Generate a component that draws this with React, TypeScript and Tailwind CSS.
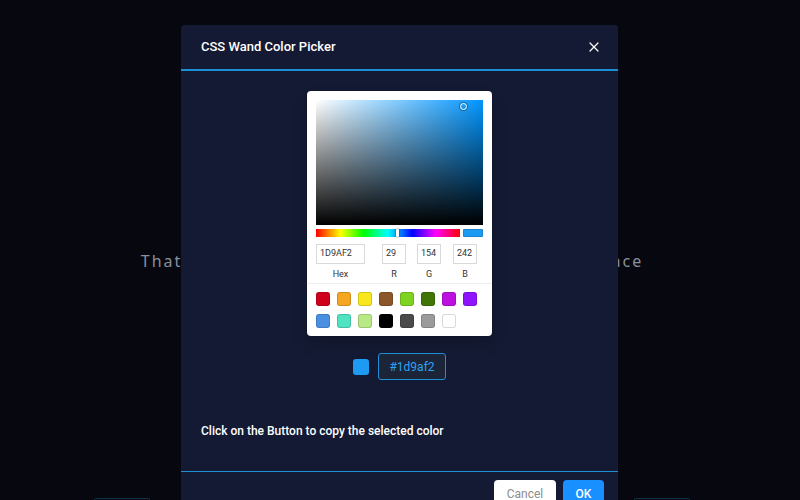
import { X } from "lucide-react"

// ─── Swatch config ────────────────────────────────────────────────────────────

const SWATCHES: string[] = [
  "bg-[#d0021b]", "bg-[#f5a623]", "bg-[#f8e71c]", "bg-[#8b572a]",
  "bg-[#7ed321]", "bg-[#417505]", "bg-[#bd10e0]", "bg-[#9013fe]",
  "bg-[#4a90e2]", "bg-[#50e3c2]", "bg-[#b8e986]", "bg-[#000000]",
  "bg-[#4a4a4a]", "bg-[#9b9b9b]", "bg-[#ffffff]",
]

// ─── Picker (sketch style) ────────────────────────────────────────────────────

function Field({ value, label, w }: { value: string; label: string; w: string }) {
  return (
    <div className={`flex flex-col items-center ${w}`}>
      <div className="w-full h-[20px] border border-[#d9d9d9] text-[9px] text-[#333] px-[3px] flex items-center overflow-hidden">
        {value}
      </div>
      <span className="mt-[4px] text-[9px] leading-[12px] text-[#333]">{label}</span>
    </div>
  )
}

function Picker() {
  return (
    <div className="w-[185px] bg-white rounded-[4px] p-[9px] pb-[8px] shadow-[0_0_0_1px_rgba(0,0,0,0.1),0_8px_16px_rgba(0,0,0,0.15)]">
      <div className="relative h-[125px] bg-[#0095ff]">
        <div className="absolute inset-0 bg-[linear-gradient(to_right,#fff,rgba(255,255,255,0))]" />
        <div className="absolute inset-0 bg-[linear-gradient(to_top,#000,rgba(0,0,0,0))]" />
        <div className="absolute left-[144px] top-[3px] w-[7px] h-[7px] rounded-full border-[1.5px] border-white shadow-[0_0_0_1px_rgba(0,0,0,0.3)]" />
      </div>

      <div className="mt-[4px] flex items-center gap-[3px]">
        <div className="relative flex-1 h-[8px] bg-[linear-gradient(to_right,#f00_0%,#ff0_17%,#0f0_33%,#0ff_50%,#00f_67%,#f0f_83%,#f00_100%)]">
          <div className="absolute left-[80px] top-0 w-[3px] h-[8px] bg-white rounded-[1px] shadow-[0_0_2px_rgba(0,0,0,0.6)]" />
        </div>
        <div className="w-[20px] h-[8px] bg-[#1d9af2] rounded-[1px] shadow-[inset_0_0_0_1px_rgba(0,0,0,0.15)]" />
      </div>

      <div className="mt-[7px] flex items-start">
        <Field value="1D9AF2" label="Hex" w="w-[49px]" />
        <div className="w-[17px]" />
        <Field value="29" label="R" w="w-[24px]" />
        <div className="w-[11px]" />
        <Field value="154" label="G" w="w-[24px]" />
        <div className="w-[12px]" />
        <Field value="242" label="B" w="w-[24px]" />
      </div>

      <div className="-mx-[9px] mt-[3px] border-t border-[#eee]" />

      <div className="mt-[8px] grid grid-cols-8 gap-y-[8px] w-[168px]">
        {SWATCHES.map((c, i) => (
          <div key={i} className={`w-[14px] h-[14px] rounded-[3px] ${c} shadow-[inset_0_0_0_1px_rgba(0,0,0,0.15)]`} />
        ))}
      </div>
    </div>
  )
}

// ─── Main exported component ──────────────────────────────────────────────────

export default function App() {
  return (
    <div className="relative w-[800px] h-[500px] overflow-hidden bg-[#06070f] font-['Roboto',sans-serif]">
      {/* page behind */}
      <div className="flex flex-col items-center pt-[249px] pr-[16px]">
        <p className="text-[16px] tracking-[2px] text-[#8a8f99] font-['Noto_Sans',sans-serif]">
          That color is now ready to be used in your workspace
        </p>
        <div className="mt-[225px] flex gap-[480px]">
          <div className="w-[60px] h-[30px] rounded-[5px] border border-[#0e3447]" />
          <div className="w-[60px] h-[30px] rounded-[5px] border border-[#0e3447]" />
        </div>
      </div>

      {/* dialog */}
      <div className="absolute left-[181px] top-[25px] w-[437px] bg-[#141a33] rounded-t-[3px]">
        <div className="h-[46px] flex items-center justify-between pl-[20px] pr-[16px] border-b-2 border-[#1d8fd6]">
          <span className="text-[13px] font-medium text-white">CSS Wand Color Picker</span>
          <X size={16} strokeWidth={1.8} className="text-white" />
        </div>

        <div className="flex flex-col items-center pt-[20px]">
          <Picker />
          <div className="mt-[17px] flex items-center gap-[9px]">
            <div className="w-[16px] h-[16px] rounded-[3px] bg-[#1d9af2]" />
            <div className="h-[27px] w-[68px] flex items-center justify-center rounded-[3px] border border-[#1d8fd6] bg-[#1c2438] text-[12px] text-[#2aa3f5]">
              #1d9af2
            </div>
          </div>
        </div>

        <div className="px-[20px] pt-[43px] pb-[32px]">
          <p className="text-[12px] leading-[16px] font-medium text-white">Click on the Button to copy the selected color</p>
        </div>

        <div className="border-t border-[#1d8fd6] flex justify-end gap-[7px] pt-[8px] pr-[14px] h-[40px]">
          <button className="w-[62px] h-[28px] rounded-[4px] bg-white text-[12px] text-[#8c8c8c]">Cancel</button>
          <button className="w-[41px] h-[28px] rounded-[4px] bg-[#1890ff] text-[12px] font-medium text-white">OK</button>
        </div>
      </div>
    </div>
  )
}
